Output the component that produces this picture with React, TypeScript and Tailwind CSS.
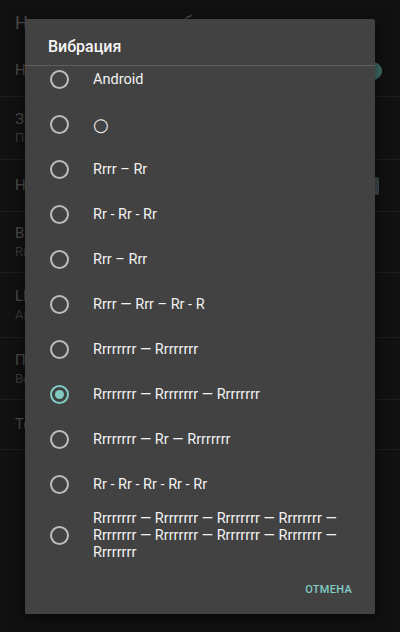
import { useState } from 'react';

const rows = [
  { h: 'h-[52px]', title: 'Напоминания', sub: '', right: 'switch' },
  { h: 'h-[63px]', title: 'Звук уведомления', sub: 'По умолчанию', right: '' },
  { h: 'h-[52px]', title: 'Настроить', sub: '', right: 'box' },
  { h: 'h-[61px]', title: 'Вибрация', sub: 'Rrrrrrrr — Rrrrrrrr — Rrrrrrrr', right: '' },
  { h: 'h-[65px]', title: 'LED', sub: 'Android', right: '' },
  { h: 'h-[62px]', title: 'Приоритет', sub: 'Всегда', right: '' },
  { h: 'h-[50px]', title: 'Тестовое уведомление', sub: '', right: '' },
];

const options = [
  'Android',
  '○',
  'Rrrr – Rr',
  'Rr - Rr - Rr',
  'Rrr – Rrr',
  'Rrrr — Rrr – Rr - R',
  'Rrrrrrrr — Rrrrrrrr',
  'Rrrrrrrr — Rrrrrrrr — Rrrrrrrr',
  'Rrrrrrrr — Rr — Rrrrrrrr',
  'Rr - Rr - Rr - Rr - Rr',
  'Rrrrrrrr — Rrrrrrrr — Rrrrrrrr — Rrrrrrrr — Rrrrrrrr — Rrrrrrrr — Rrrrrrrr — Rrrrrrrr — Rrrrrrrr',
];

const Radio = ({ checked }: { checked: boolean }) => (
  <div
    className={
      checked
        ? 'w-[19px] h-[19px] rounded-full border-2 border-[#80cbc4] flex items-center justify-center shrink-0'
        : 'w-[19px] h-[19px] rounded-full border-2 border-[#bdbdbd] shrink-0'
    }
  >
    {checked && <div className="w-[9px] h-[9px] rounded-full bg-[#80cbc4]" />}
  </div>
);

const App = () => {
  const [selected, setSelected] = useState(7);

  return (
    <div className="relative w-[400px] h-[632px] overflow-hidden bg-[#111111] font-['Roboto',sans-serif]">
      {/* settings screen behind the scrim */}
      <div className="h-[45px] px-[15px] pt-[11px] text-[18px] leading-[24px] tracking-[0.7px] text-[#4a4a4a]">
        Напоминания о событиях
      </div>
      {rows.map((row, i) => (
        <div key={i} className={`${row.h} flex items-center justify-between px-[15px] border-b border-[#1e1e1e]`}>
          <div className="flex flex-col">
            <span className="text-[15px] leading-[19px] text-[#4e4e4e]">{row.title}</span>
            {row.sub && <span className="text-[13px] leading-[17px] text-[#3c3c3c]">{row.sub}</span>}
          </div>
          {row.right === 'switch' && (
            <div className="w-[30px] h-[14px] rounded-full bg-[#2a4643] flex items-center justify-end mr-[3px]">
              <div className="w-[18px] h-[18px] rounded-full bg-[#3f6e69]" />
            </div>
          )}
          {row.right === 'box' && <div className="w-[14px] h-[18px] rounded-[2px] bg-[#3d4d4e] mr-[6px]" />}
        </div>
      ))}

      {/* dialog */}
      <div className="absolute left-[25px] top-[19px] w-[350px] h-[595px] bg-[#424242] rounded-[2px] shadow-[0_4px_16px_rgba(0,0,0,0.6)] flex flex-col">
        <div className="h-[46px] pl-[23px] pt-[18px] text-[16px] leading-[20px] font-medium text-[#f5f5f5]">
          Вибрация
        </div>
        <div className="h-px bg-[#5e5e5e]" />
        <div className="flex-1 overflow-hidden">
          <div className="-mt-[9.5px] flex flex-col">
            {options.map((opt, i) => {
              const long = i === options.length - 1;
              return (
                <div
                  key={i}
                  onClick={() => setSelected(i)}
                  className={
                    long
                      ? 'flex items-center pl-[25px] pr-[30px] py-[3px] cursor-pointer'
                      : 'h-[45px] flex items-center pl-[25px] pr-[30px] cursor-pointer'
                  }
                >
                  <Radio checked={selected === i} />
                  <span
                    className={
                      opt === '○'
                        ? "ml-[24px] text-[18px] leading-[17px] text-[#f2f2f2] font-['DejaVu_Sans',sans-serif]"
                        : 'ml-[24px] text-[14.5px] leading-[17px] text-[#f2f2f2]'
                    }
                  >
                    {opt}
                  </span>
                </div>
              );
            })}
          </div>
        </div>
        <div className="h-[44px] flex items-start justify-end pr-[23px] pt-[13px]">
          <button className="text-[11px] leading-[14px] font-medium tracking-[0.3px] text-[#80cbc4]">ОТМЕНА</button>
        </div>
      </div>
    </div>
  );
};

export default App;
